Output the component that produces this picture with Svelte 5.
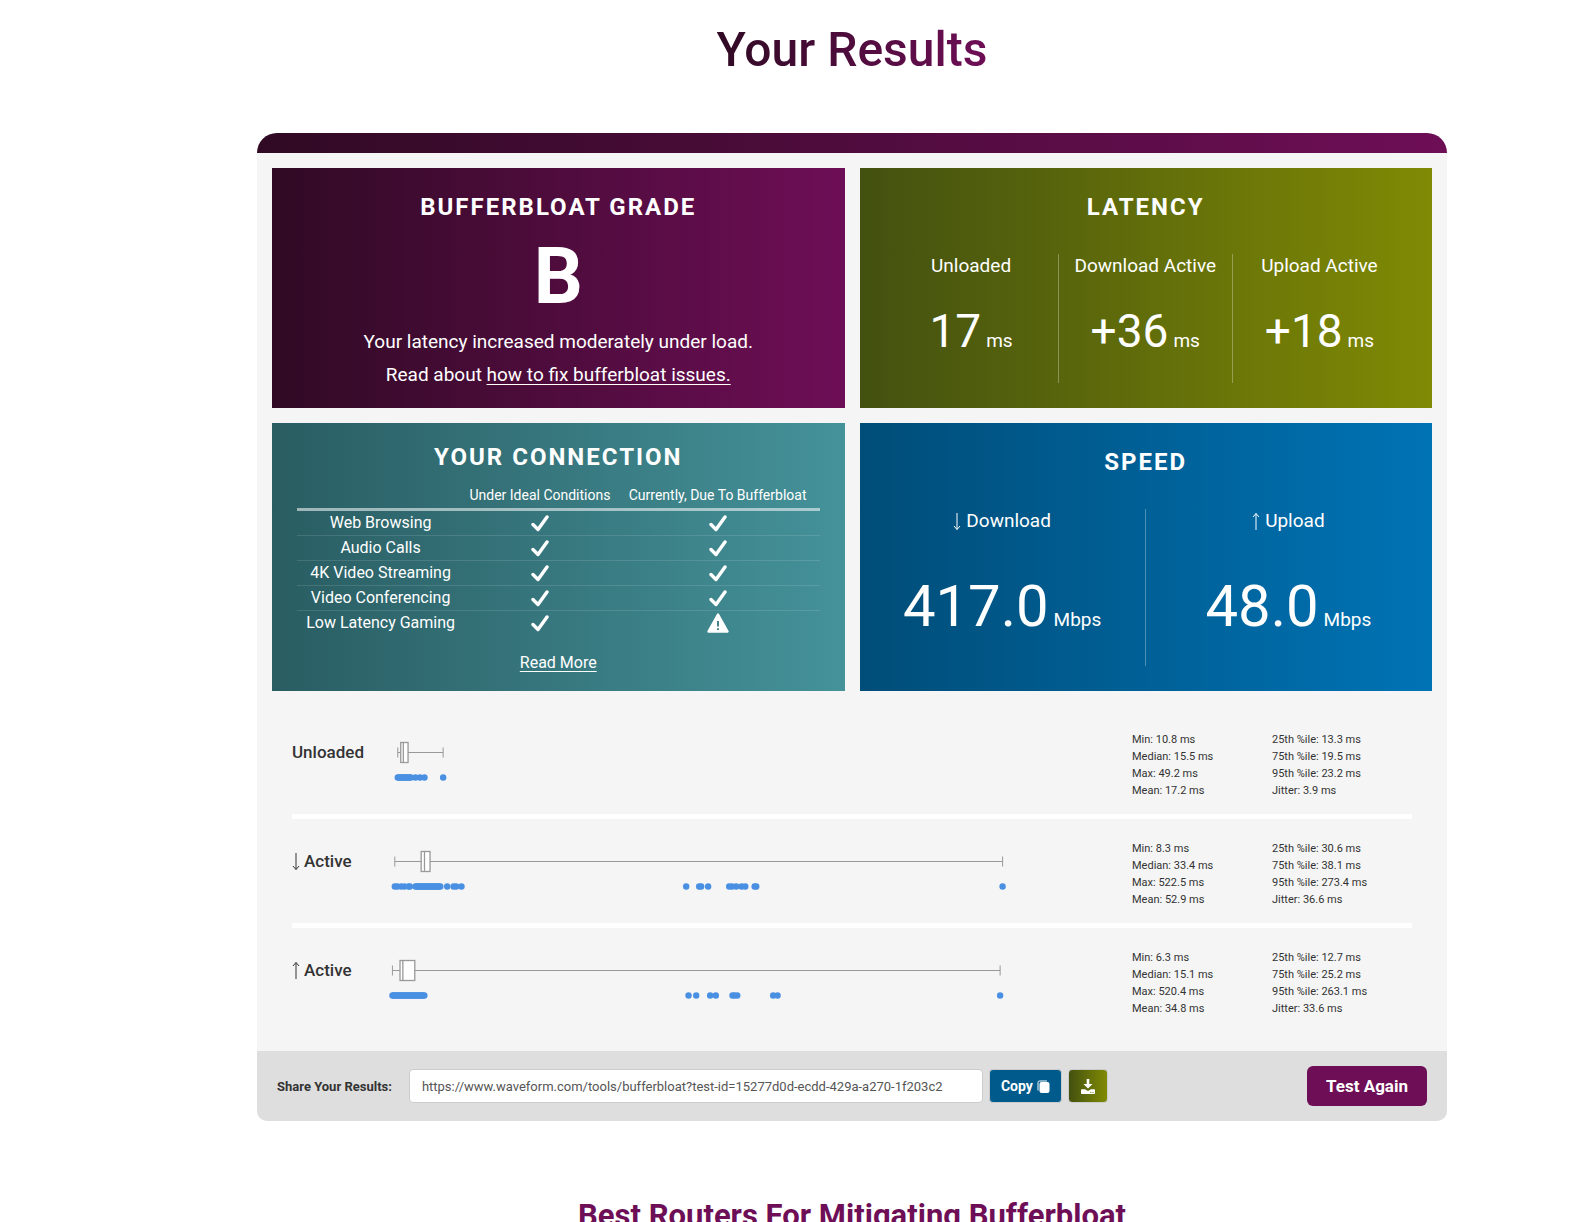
<script>
  const range = (from, to, step) => {
    const out = [];
    for (let v = from; v <= to; v += step) out.push(v);
    return out;
  };

  const latency = [
    { label: 'Unloaded', value: '17' },
    { label: 'Download Active', value: '+36' },
    { label: 'Upload Active', value: '+18' }
  ];

  const speed = [
    { label: 'Download', value: '417.0', up: false },
    { label: 'Upload', value: '48.0', up: true }
  ];

  const uses = [
    { name: 'Web Browsing', now: true },
    { name: 'Audio Calls', now: true },
    { name: '4K Video Streaming', now: true },
    { name: 'Video Conferencing', now: true },
    { name: 'Low Latency Gaming', now: false }
  ];

  const runs = [
    {
      label: 'Unloaded', arrow: '',
      min: 10.8, median: 15.5, max: 49.2, mean: 17.2, p25: 13.3, p75: 19.5, p95: 23.2, jitter: 3.9,
      dots: [...range(10.8, 22, 1), 25.8, 29.6, 33.4, 49.2]
    },
    {
      label: 'Active', arrow: 'down',
      min: 8.3, median: 33.4, max: 522.5, mean: 52.9, p25: 30.6, p75: 38.1, p95: 273.4, jitter: 36.6,
      dots: [8.3, 10.3, 13.7, 16.5, 19.9, 21, ...range(25.8, 47.5, 1), 52.6, 58, 60.2, 64.7, 254.8, 265.8, 267.5, 273.4,
        291.2, 293.5, 297.1, 301.7, 304.8, 312.7, 314.1, 522.5]
    },
    {
      label: 'Active', arrow: 'up',
      min: 6.3, median: 15.1, max: 520.4, mean: 34.8, p25: 12.7, p75: 25.2, p95: 263.1, jitter: 33.6,
      dots: [...range(6.3, 33.4, 1), 256.8, 263.3, 275.1, 279.9, 294, 295.7, 298, 328.4, 332.1, 520.4]
    }
  ];

  const x = (ms) => 10 + ms * 1.182;
  const shareUrl = 'https://www.waveform.com/tools/bufferbloat?test-id=15277d0d-ecdd-429a-a270-1f203c2';
</script>

{#snippet arrow(up)}
  <svg class="arrow" viewBox="0 0 8 18" width="8" height="18" aria-hidden="true">
    {#if up}
      <path d="M4 18V1.500M1 5 4 1.500l3 3.500" />
    {:else}
      <path d="M4 1V17.500M1 14 4 17.500l3-3.500" />
    {/if}
  </svg>
{/snippet}

{#snippet check()}
  <svg class="mark" viewBox="0 0 18 17" width="18" height="17" role="img" aria-label="Yes">
    <path d="M2 9.500 7 14.500 16 2" fill="none" stroke="#fff" stroke-width="3.400" stroke-linecap="round" stroke-linejoin="round" />
  </svg>
{/snippet}

<main>
  <h1><span>Your Results</span></h1>

  <section class="card">
    <div class="cap"></div>

    <div class="panels">
      <section class="panel grade">
        <h2>BUFFERBLOAT GRADE</h2>
        <strong>B</strong>
        <p>Your latency increased moderately under load.</p>
        <p>Read about <a href="#fix">how to fix bufferbloat issues.</a></p>
      </section>

      <section class="panel latency">
        <h2>LATENCY</h2>
        <div class="cols">
          {#each latency as item}
            <div class="col">
              <div class="label">{item.label}</div>
              <div class="value">{item.value}<small>ms</small></div>
            </div>
          {/each}
        </div>
      </section>

      <section class="panel connection">
        <h2>YOUR CONNECTION</h2>
        <table>
          <thead>
            <tr><td></td><th scope="col">Under Ideal Conditions</th><th scope="col">Currently, Due To Bufferbloat</th></tr>
          </thead>
          <tbody>
            {#each uses as use}
              <tr>
                <th scope="row">{use.name}</th>
                <td>{@render check()}</td>
                <td>
                  {#if use.now}
                    {@render check()}
                  {:else}
                    <svg class="mark" viewBox="0 0 22 20" width="22" height="20" role="img" aria-label="Warning">
                      <path d="M11 1.500 20.500 18.500h-19z" fill="#fff" stroke="#fff" stroke-width="2.400" stroke-linejoin="round" />
                      <path d="M11 8v5.500M11 15.200v1.800" stroke="#35757c" stroke-width="1.800" />
                    </svg>
                  {/if}
                </td>
              </tr>
            {/each}
          </tbody>
        </table>
        <a class="more" href="#more">Read More</a>
      </section>

      <section class="panel speed">
        <h2>SPEED</h2>
        <div class="cols">
          {#each speed as item}
            <div class="col">
              <div class="label">{@render arrow(item.up)}{item.label}</div>
              <div class="value">{item.value}<small>Mbps</small></div>
            </div>
          {/each}
        </div>
      </section>
    </div>

    <div class="runs">
      {#each runs as run}
        <div class="run">
          <h3>{#if run.arrow}{@render arrow(run.arrow === 'up')}{/if}{run.label}</h3>
          <svg class="plot" viewBox="0 0 700 68" width="700" height="68" aria-hidden="true">
            <g fill="none" stroke="#999">
              <path d="M{x(run.min)} 21.500H{x(run.max)}M{x(run.min)} 16.500v10M{x(run.max)} 16.500v10" />
              <rect x={x(run.p25)} y="11.500" width={x(run.p75) - x(run.p25)} height="20" fill="#fff" stroke-width="1.300" />
              <path d="M{x(run.median)} 11.500v20" stroke-width="1.300" />
            </g>
            <g fill="#4a90e2">
              {#each run.dots as dot}
                <circle cx={x(dot)} cy="46.500" r="3.200" />
              {/each}
            </g>
          </svg>
          <ul>
            <li>Min: {run.min} ms</li>
            <li>Median: {run.median} ms</li>
            <li>Max: {run.max} ms</li>
            <li>Mean: {run.mean} ms</li>
          </ul>
          <ul>
            <li>25th %ile: {run.p25} ms</li>
            <li>75th %ile: {run.p75} ms</li>
            <li>95th %ile: {run.p95} ms</li>
            <li>Jitter: {run.jitter} ms</li>
          </ul>
        </div>
      {/each}
    </div>

    <footer>
      <label for="share">Share Your Results:</label>
      <input id="share" type="text" readonly value={shareUrl} />
      <button class="copy" type="button">
        Copy
        <svg viewBox="0 0 13 13" width="13" height="13" aria-hidden="true">
          <path d="M1 10.500V2.500Q1 1 2.500 1H10" fill="none" stroke="#fff" />
          <rect x="2.500" y="2" width="10" height="11" rx="2" fill="#fff" />
        </svg>
      </button>
      <button class="download" type="button" aria-label="Download results">
        <svg viewBox="0 0 14 15" width="14" height="15" aria-hidden="true">
          <path d="M5.700 0h2.600v5H11.500L7 9.500 2.500 5H5.700z" fill="#fff" />
          <path d="M0 11q0-.8.8-.8H4L7 12l3-1.800h3.200q.8 0 .8.800v3.200q0 .8-.8.800H.8q-.8 0-.8-.8z" fill="#fff" />
          <path d="M9.300 13.400h1M11.500 13.400h1" stroke="#65700a" />
        </svg>
      </button>
      <button class="again" type="button">Test Again</button>
    </footer>
  </section>

  <h2 class="next">Best Routers For Mitigating Bufferbloat</h2>
</main>

<style>
  :global(body) {
    margin: 0;
    background: #fff;
  }

  main {
    padding: 20px 0 0 126px;
    color: #333;
    font-family: Roboto, 'Liberation Sans', sans-serif;
    font-size: 14px;
  }

  h1, h2, h3, p, ul {
    margin: 0;
    padding: 0;
  }

  h1 {
    font-size: 48px;
    line-height: 60px;
    font-weight: 500;
    text-align: center;
  }

  h1 span {
    background: linear-gradient(90deg, #300a24, #6e0e56);
    background-clip: text;
    -webkit-background-clip: text;
    color: transparent;
  }

  .card {
    max-width: 1190px;
    margin: 53px auto 0;
    border-radius: 20px 20px 10px 10px;
    background: #f5f5f5;
    overflow: hidden;
  }

  .cap {
    height: 20px;
    background: linear-gradient(90deg, #300a24, #6e0e56);
  }

  .panels {
    display: grid;
    grid-template-columns: 1fr 1fr;
    grid-template-rows: minmax(240px, auto) minmax(268px, auto);
    gap: 15px;
    padding: 15px 15px 0;
  }

  .panel {
    display: flex;
    flex-direction: column;
    padding: 24px 25px 25px;
    box-sizing: border-box;
    color: #fff;
    text-align: center;
    font-size: 19px;
  }

  .grade {
    padding-bottom: 12px;
    background: linear-gradient(90deg, #300a24, #6e0e56);
  }

  .latency {
    background: linear-gradient(90deg, #435110, #808a04);
  }

  .connection {
    padding-top: 19px;
    padding-bottom: 12px;
    background: linear-gradient(90deg, #295d62, #45929a);
  }

  .speed {
    padding-left: 0;
    padding-right: 0;
    background: linear-gradient(90deg, #004d78, #0073b5);
  }

  .panel h2 {
    font-size: 24px;
    line-height: 30px;
    font-weight: 700;
    letter-spacing: 2px;
  }

  .grade strong {
    margin-top: 7px;
    font-size: 77px;
    line-height: 96px;
    font-weight: 700;
  }

  .grade p {
    line-height: 33px;
  }

  a {
    color: #fff;
    text-underline-offset: 3px;
  }

  .cols {
    display: flex;
    flex: 1;
    margin-top: 32px;
  }

  .col {
    flex: 1;
    border-right: 1px solid rgba(255, 255, 255, 0.3);
  }

  .col:last-child {
    border-right-color: transparent;
  }

  .label {
    display: flex;
    align-items: center;
    justify-content: center;
    gap: 5px;
    line-height: 24px;
  }

  .value {
    font-size: 46px;
    line-height: 54px;
    margin-top: 26px;
  }

  .speed .value {
    font-size: 58px;
    line-height: 70px;
    margin-top: 38px;
  }

  .value small {
    margin-left: 5px;
    font-size: 19px;
  }

  .arrow {
    flex: none;
    fill: none;
    stroke: currentColor;
  }

  table {
    width: 100%;
    border-collapse: collapse;
    table-layout: fixed;
    margin-top: 10px;
  }

  th, td {
    padding: 0;
    font-weight: 400;
  }

  thead th {
    height: 26px;
    font-size: 14px;
    white-space: nowrap;
  }

  thead td { width: 32%; }
  thead th:nth-child(2) { width: 29%; }

  thead tr {
    border-bottom: 3px solid rgba(255, 255, 255, 0.55);
  }

  tbody tr + tr {
    border-top: 1px solid rgba(255, 255, 255, 0.12);
  }

  tbody th {
    height: 24px;
    font-size: 16px;
    line-height: 24px;
  }

  .mark {
    display: block;
    margin: 0 auto;
  }

  .more {
    align-self: center;
    margin-top: 16px;
    font-size: 16px;
    line-height: 24px;
  }

  .runs {
    padding: 19px 35px 34px;
  }

  .run {
    display: grid;
    grid-template-columns: 83px minmax(0, 1fr) 140px 140px;
    padding: 21px 0 15px;
  }

  .run + .run {
    border-top: 5px solid #fff;
  }

  .run:last-child {
    padding-bottom: 0;
  }

  h3 {
    display: flex;
    align-items: center;
    gap: 4px;
    height: 42px;
    font-size: 17px;
    font-weight: 500;
  }

  .plot {
    display: block;
  }

  ul {
    list-style: none;
    font-size: 11px;
    line-height: 17px;
    color: #333;
  }

  footer {
    display: flex;
    align-items: center;
    gap: 6px;
    height: 70px;
    padding: 0 20px;
    background: #dedede;
  }

  label {
    margin-right: 11px;
    font-size: 13px;
    font-weight: 700;
    white-space: nowrap;
  }

  input {
    box-sizing: border-box;
    width: 574px;
    height: 34px;
    padding: 0 12px;
    border: 1px solid #ccc;
    border-radius: 4px;
    background: #fff;
    color: #555;
    font: 13px Roboto, sans-serif;
  }

  button {
    display: flex;
    align-items: center;
    justify-content: center;
    gap: 4px;
    height: 34px;
    padding: 0 12px;
    border: 1px solid #ccc;
    border-radius: 4px;
    color: #fff;
    font: 700 14px Roboto, sans-serif;
    white-space: nowrap;
  }

  .copy {
    padding: 0 11px;
    background: #005a8c;
  }

  .download {
    background: linear-gradient(90deg, #435110, #808a04);
  }

  .again {
    height: 40px;
    margin-left: auto;
    padding: 0 19px;
    border: 0;
    border-radius: 6px;
    background: #6e0e56;
    font-size: 17px;
  }

  .next {
    margin-top: 77px;
    color: #6e0e56;
    font-size: 31px;
    line-height: 36px;
    font-weight: 700;
    text-align: center;
  }
</style>
